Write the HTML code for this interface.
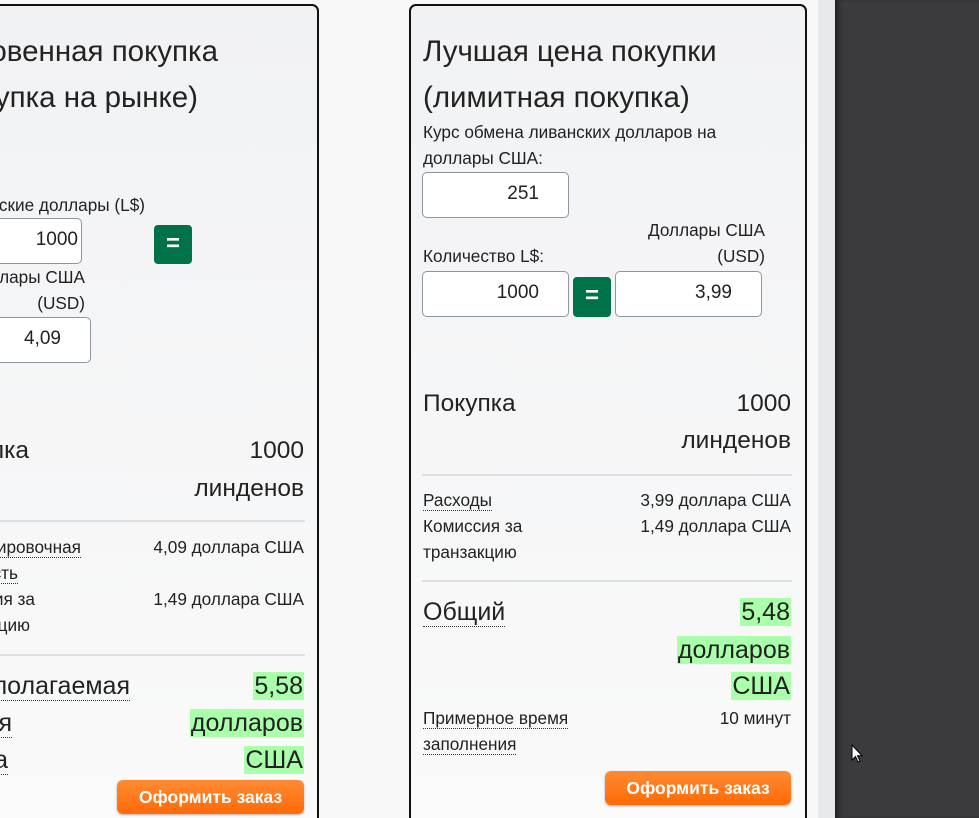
<!DOCTYPE html>
<html><head><meta charset="utf-8">
<style>
*{margin:0;padding:0;box-sizing:border-box}
html,body{width:979px;height:818px;overflow:hidden}
body{background:#f8f8f9;font-family:"Liberation Sans","Noto Sans CJK SC",sans-serif;color:#222;position:relative}
.card{position:absolute;top:4px;height:830px;border:2px solid #111;border-radius:7px;background:linear-gradient(#f1f2f4,#fafafa)}
.t{position:absolute;white-space:nowrap}
.r{text-align:right}
.ttl{font-size:29.5px;line-height:46px;color:#222}
.s{font-size:17.2px;line-height:26px}
.L{font-size:24.5px;line-height:38px}
.g{font-size:25px;line-height:35px;background:#aaffaa;padding:0 1px}
.B{font-size:25px;line-height:32px}
.dot{border-bottom:1px dotted #333}
.inp{position:absolute;background:#fff;border:1px solid #8e959e;border-radius:5px;font-size:19px;text-align:right;padding-right:29px;line-height:42px}
.eq{position:absolute;background:#007249;border-radius:4px;color:#fff;font-size:24px;font-weight:bold;text-align:center;line-height:38px}
.hr{position:absolute;height:2px;background:#dcdfe3}
.btn{position:absolute;border-radius:6px;background:linear-gradient(#ff8a33,#ff6a06);color:#fff;font-weight:bold;font-size:17.5px;text-align:center;line-height:34px;box-shadow:0 1px 2px rgba(0,0,0,.3)}
.clip{position:absolute;left:0;top:0;width:330px;height:818px;overflow:hidden}
</style></head><body>
<div style="position:absolute;left:818px;top:0;width:17px;height:818px;background:#e8e9ec"></div>
<div style="position:absolute;left:835px;top:0;width:144px;height:818px;background:#3b3b3d;box-shadow:inset 6px 0 6px -3px #1e1e1f"></div>

<div class="clip">
<div class="card" style="left:-80px;width:399px"></div>
<div class="t ttl" style="right:112px;top:29px">Мгновенная покупка</div>
<div class="t ttl" style="right:132px;top:75px">(Покупка на рынке)</div>
<div class="t s" style="right:185px;top:192px">Линденовские доллары (L$)</div>
<div class="inp" style="left:-70px;top:218px;width:152px;height:46px;padding-right:3px">1000</div>
<div class="eq" style="left:154px;top:225px;width:38px;height:39px">=</div>
<div class="t s r" style="right:245px;top:264px">Доллары США</div>
<div class="t s r" style="right:245px;top:290px">(USD)</div>
<div class="inp" style="left:-60px;top:317px;width:151px;height:46px">4,09</div>
<div class="t L" style="right:301px;top:432px">Покупка</div>
<div class="t L r" style="left:100px;width:204px;top:432px">1000</div>
<div class="t L r" style="left:100px;width:204px;top:470px">линденов</div>
<div class="hr" style="left:-66px;width:371px;top:520px"></div>
<div class="t s" style="right:249px;top:534px"><span class="dot">Ориентировочная</span></div>
<div class="t s" style="right:312px;top:560px"><span class="dot">стоимость</span></div>
<div class="t s r" style="left:100px;width:204px;top:534px">4,09 доллара США</div>
<div class="t s" style="right:295px;top:586px">Комиссия за</div>
<div class="t s" style="right:300px;top:612px">транзакцию</div>
<div class="t s r" style="left:100px;width:204px;top:586px">1,49 доллара США</div>
<div class="hr" style="left:-66px;width:371px;top:654px"></div>
<div class="t B" style="right:200px;top:670px"><span class="dot">Предполагаемая</span></div>
<div class="t B" style="right:318px;top:707px"><span class="dot">общая</span></div>
<div class="t B" style="right:322px;top:744px"><span class="dot">сумма</span></div>
<div class="t r" style="left:100px;width:204px;top:669px"><span class="g">5,58</span></div>
<div class="t r" style="left:100px;width:204px;top:706px"><span class="g">долларов</span></div>
<div class="t r" style="left:100px;width:204px;top:743px"><span class="g">США</span></div>
<div class="btn" style="left:117px;top:780px;width:187px;height:34px">Оформить заказ</div>
</div>

<div class="card" style="left:409px;width:398px"></div>
<div class="t ttl" style="left:423px;top:29px">Лучшая цена покупки</div>
<div class="t ttl" style="left:423px;top:75px">(лимитная покупка)</div>
<div class="t s" style="left:423px;top:119px">Курс обмена ливанских долларов на</div>
<div class="t s" style="left:423px;top:145px">доллары США:</div>
<div class="inp" style="left:422px;top:172px;width:147px;height:46px">251</div>
<div class="t s r" style="left:600px;width:165px;top:217px">Доллары США</div>
<div class="t s r" style="left:600px;width:165px;top:243px">(USD)</div>
<div class="t s" style="left:423px;top:243px">Количество L$:</div>
<div class="inp" style="left:422px;top:271px;width:147px;height:46px">1000</div>
<div class="eq" style="left:573px;top:277px;width:38px;height:40px">=</div>
<div class="inp" style="left:615px;top:271px;width:147px;height:46px">3,99</div>
<div class="t L" style="left:423px;top:385px">Покупка</div>
<div class="t L r" style="left:600px;width:191px;top:385px">1000</div>
<div class="t L r" style="left:600px;width:191px;top:422px">линденов</div>
<div class="hr" style="left:422px;width:370px;top:474px"></div>
<div class="t s" style="left:423px;top:487px"><span class="dot">Расходы</span></div>
<div class="t s r" style="left:600px;width:191px;top:487px">3,99 доллара США</div>
<div class="t s" style="left:423px;top:513px">Комиссия за</div>
<div class="t s" style="left:423px;top:539px">транзакцию</div>
<div class="t s r" style="left:600px;width:191px;top:513px">1,49 доллара США</div>
<div class="hr" style="left:422px;width:370px;top:580px"></div>
<div class="t B" style="left:423px;top:596px"><span class="dot">Общий</span></div>
<div class="t r" style="left:600px;width:191px;top:595px"><span class="g">5,48</span></div>
<div class="t r" style="left:600px;width:191px;top:633px"><span class="g">долларов</span></div>
<div class="t r" style="left:600px;width:191px;top:669px"><span class="g">США</span></div>
<div class="t s" style="left:423px;top:705px"><span class="dot">Примерное время</span></div>
<div class="t s" style="left:423px;top:731px"><span class="dot">заполнения</span></div>
<div class="t s r" style="left:600px;width:191px;top:705px">10 минут</div>
<div class="btn" style="left:605px;top:771px;width:186px;height:34px">Оформить заказ</div>

<svg style="position:absolute;left:851px;top:744px" width="14" height="20" viewBox="0 0 14 20"><path d="M1 1 L1 16 L4.5 12.5 L7 18 L9 17 L6.5 11.8 L11 11.8 Z" fill="#fff" stroke="#000" stroke-width="1"/></svg>
</body></html>
